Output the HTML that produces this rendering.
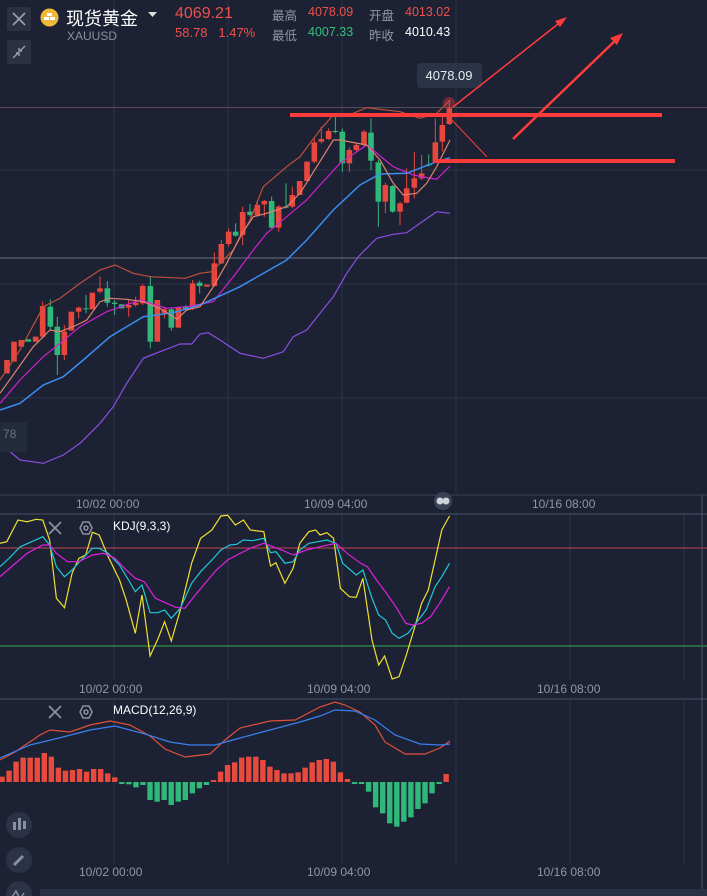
<!DOCTYPE html>
<html><head><meta charset="utf-8"><style>
html,body{margin:0;background:#1c2234;width:707px;height:896px;overflow:hidden}
body{font-family:"Liberation Sans","Noto Sans CJK SC",sans-serif;position:relative}
.t{position:absolute;white-space:nowrap}
.btn{position:absolute;left:7px;width:24px;height:24px;background:#2b3142;border-radius:2px}
.circ{position:absolute;left:6px;width:26px;height:26px;border-radius:50%;background:#2c3346}
</style></head><body>
<svg id="s" width="707" height="896" style="position:absolute;left:0;top:0">
<g stroke="#2c3446" stroke-width="1">
<line x1="114" y1="0" x2="114" y2="493"/><line x1="228" y1="0" x2="228" y2="493"/><line x1="342" y1="0" x2="342" y2="493"/><line x1="456" y1="0" x2="456" y2="493"/>
<line x1="114" y1="514" x2="114" y2="680"/><line x1="228" y1="514" x2="228" y2="680"/><line x1="342" y1="514" x2="342" y2="680"/><line x1="456" y1="514" x2="456" y2="680"/><line x1="570" y1="514" x2="570" y2="680"/><line x1="684" y1="514" x2="684" y2="680"/>
<line x1="114" y1="700" x2="114" y2="864"/><line x1="228" y1="700" x2="228" y2="864"/><line x1="342" y1="700" x2="342" y2="864"/><line x1="456" y1="700" x2="456" y2="864"/><line x1="570" y1="700" x2="570" y2="864"/><line x1="684" y1="700" x2="684" y2="864"/>
<line x1="0" y1="170" x2="707" y2="170"/><line x1="0" y1="284" x2="707" y2="284"/><line x1="0" y1="398" x2="707" y2="398"/>
</g>
<line x1="0" y1="107.5" x2="707" y2="107.5" stroke="#5a4a55"/>
<line x1="0" y1="258" x2="707" y2="258" stroke="#6a7080"/>
<line x1="0" y1="495" x2="707" y2="495" stroke="#3a4256"/>
<line x1="0" y1="514" x2="707" y2="514" stroke="#4a5266"/>
<line x1="0" y1="699" x2="707" y2="699" stroke="#4a5266"/>
<line x1="0" y1="548" x2="707" y2="548" stroke="#c0474e"/>
<line x1="0" y1="646" x2="707" y2="646" stroke="#38b04a"/>
<line x1="702" y1="495" x2="702" y2="896" stroke="#4a5266"/>
<rect x="40" y="889" width="667" height="7" fill="#2a3144"/>
<g id="cd"></g>
<g id="ln" fill="none" stroke-width="1.2"></g>
<rect x="417" y="63" width="65" height="25" rx="3" fill="#2b3447"/>
<text x="449" y="80" fill="#e8ecf2" font-size="13" text-anchor="middle" font-family="Liberation Sans">4078.09</text>
<circle cx="449" cy="103" r="6" fill="#ff4040" opacity=".35"/>
<line x1="290" y1="115" x2="662" y2="115" stroke="#ff3a3a" stroke-width="4"/>
<line x1="433" y1="161" x2="675" y2="161" stroke="#ff3a3a" stroke-width="4"/>
<line x1="453" y1="107" x2="563" y2="20" stroke="#ff3a3a" stroke-width="1.5"/>
<polygon points="567,17 555,21 560,27" fill="#ff3a3a"/>
<line x1="513" y1="139" x2="619" y2="37" stroke="#ff3a3a" stroke-width="2.5"/>
<polygon points="623,33 610,38 617,45" fill="#ff3a3a"/>
<line x1="450" y1="118" x2="487" y2="157" stroke="#ff3a3a" stroke-width="1"/>
<circle cx="443" cy="501" r="9" fill="#3a4256"/><circle cx="440" cy="501" r="3.5" fill="#cfd3dc"/><circle cx="446" cy="501" r="3.5" fill="#cfd3dc"/>
<g stroke="#8a90a0" stroke-width="1.8"><line x1="49" y1="522" x2="61" y2="534"/><line x1="61" y1="522" x2="49" y2="534"/><line x1="49" y1="706" x2="61" y2="718"/><line x1="61" y1="706" x2="49" y2="718"/></g>
<g fill="none" stroke="#8a90a0" stroke-width="1.5"><polygon points="80,528 83,522 89,522 92,528 89,534 83,534"/><circle cx="86" cy="528" r="2"/><polygon points="80,712 83,706 89,706 92,712 89,718 83,718"/><circle cx="86" cy="712" r="2"/></g>
</svg>
<div class="btn" style="top:7px"><svg width="24" height="24"><path d="M6 6L18 18M18 6L6 18" stroke="#9aa0ad" stroke-width="1.6"/></svg></div>
<div class="btn" style="top:40px"><svg width="24" height="24"><path d="M6 18L11 13M13 11L18 6M9 13h3v3M15 11h-3V8" stroke="#9aa0ad" stroke-width="1.4" fill="none"/></svg></div>
<div class="circ" style="top:812px"><svg width="26" height="26"><g fill="#8a90a0"><rect x="7" y="10" width="3" height="8"/><rect x="12" y="6" width="3" height="12"/><rect x="17" y="9" width="3" height="8"/></g></svg></div>
<div class="circ" style="top:847px"><svg width="26" height="26"><path d="M8 18L17 9" stroke="#8a90a0" stroke-width="3"/></svg></div>
<div class="circ" style="top:881px"><svg width="26" height="26"><path d="M6 16l4-6 4 8 4-6" stroke="#8a90a0" stroke-width="1.5" fill="none"/></svg></div>
<svg class="t" style="left:40px;top:8px" width="19" height="19"><circle cx="9.5" cy="9.5" r="9" fill="#f0b838"/><g fill="#fff"><rect x="7" y="5" width="5" height="3"/><rect x="4" y="9" width="5" height="3"/><rect x="10" y="9" width="5" height="3"/></g></svg>
<div class="t" style="left:66px;top:5px;font-size:18px;color:#fff">现货黄金</div>
<svg class="t" style="left:148px;top:12px" width="10" height="6"><path d="M0 0h9L4.5 5z" fill="#ddd"/></svg>
<div class="t" style="left:67px;top:29px;font-size:12px;color:#8a90a0">XAUUSD</div>
<div class="t" style="left:175px;top:5px;font-size:16px;color:#f0504a">4069.21</div>
<div class="t" style="left:175px;top:25px;font-size:13px;color:#f0504a">58.78&nbsp;&nbsp;&nbsp;1.47%</div>
<div class="t" style="left:272px;top:5px;font-size:12.5px;color:#9096a4">最高</div>
<div class="t" style="left:308px;top:5px;font-size:12.5px;color:#f0504a">4078.09</div>
<div class="t" style="left:369px;top:5px;font-size:12.5px;color:#9096a4">开盘</div>
<div class="t" style="left:405px;top:5px;font-size:12.5px;color:#f0504a">4013.02</div>
<div class="t" style="left:272px;top:25px;font-size:12.5px;color:#9096a4">最低</div>
<div class="t" style="left:308px;top:25px;font-size:12.5px;color:#34c07a">4007.33</div>
<div class="t" style="left:369px;top:25px;font-size:12.5px;color:#9096a4">昨收</div>
<div class="t" style="left:405px;top:25px;font-size:12.5px;color:#fff">4010.43</div>
<div class="t" style="left:0;top:422px;width:27px;height:30px;background:#242b3b"></div>
<div class="t" style="left:3px;top:427px;font-size:12px;color:#6a7080">78</div>
<div class="t" style="left:76px;top:497px;font-size:12px;color:#9096a4">10/02 00:00</div>
<div class="t" style="left:304px;top:497px;font-size:12px;color:#9096a4">10/09 04:00</div>
<div class="t" style="left:532px;top:497px;font-size:12px;color:#9096a4">10/16 08:00</div>
<div class="t" style="left:79px;top:682px;font-size:12px;color:#9096a4">10/02 00:00</div>
<div class="t" style="left:307px;top:682px;font-size:12px;color:#9096a4">10/09 04:00</div>
<div class="t" style="left:537px;top:682px;font-size:12px;color:#9096a4">10/16 08:00</div>
<div class="t" style="left:79px;top:865px;font-size:12px;color:#9096a4">10/02 00:00</div>
<div class="t" style="left:307px;top:865px;font-size:12px;color:#9096a4">10/09 04:00</div>
<div class="t" style="left:537px;top:865px;font-size:12px;color:#9096a4">10/16 08:00</div>
<div class="t" style="left:113px;top:519px;font-size:12px;color:#fff">KDJ(9,3,3)</div>
<div class="t" style="left:113px;top:703px;font-size:12px;color:#fff">MACD(12,26,9)</div>
<script>
var NS="http://www.w3.org/2000/svg",cd=document.getElementById('cd'),ln=document.getElementById('ln');
function el(t,a,p){var e=document.createElementNS(NS,t);for(var k in a)e.setAttribute(k,a[k]);p.appendChild(e);return e;}
var R="#e8473e",G="#2fb87a";
var C=[[21,900,940,R],[42,845,905,R],[64,840,860,R],[85,838,845,G],[107,830,845,R],[128,738,830,R,725,835],[151,740,800,G,718,810],[172,800,885,G,770,945],[193,815,885,R,795,900],[214,755,812,R],[236,743,755,R,740,775],[258,745,748,G,705,760],[277,698,748,R],[300,685,695,R,650,700],[322,685,728,G,663,740],[344,728,732,G,720,765],[365,733,745,G],[386,735,743,R,720,770],[407,728,735,R,710,740],[428,678,730,R,672,735],[451,678,845,G,648,865],[472,720,845,R],[493,748,760,R,740,775],[514,748,803,G,742,812],[535,742,803,R],[557,740,748,G,735,752],[578,670,745,R,660,750],[599,668,678,G,662,700],[621,674,680,R],[643,610,678,R,578,680],[664,552,610,R,540,612],[686,515,552,R,505,560],[707,515,527,G,490,530],[728,456,525,R,440,555],[750,455,465,G,432,470],[772,435,465,R,425,470],[793,423,433,R,420,470],[815,423,503,G,410,505],[836,440,503,R,435,515],[858,440,443,G,370,445],[877,405,440,R,380,445],[899,363,405,R],[921,305,363,R],[943,247,305,R,235,310],[964,237,245,R,200,250],[986,213,237,R,205,240],[1006,213,216,G,170,220],[1027,215,310,G,205,335],[1048,270,310,R,262,335],[1069,255,270,R,250,275],[1092,215,255,R,210,260],[1113,218,302,G,175,330],[1135,307,425,G,300,500],[1156,375,425,R,368,460],[1178,378,455,G,375,458],[1200,430,455,R,425,495],[1220,385,428,R,325,430],[1243,355,383,R,275,415],[1265,340,355,R,285,360],[1286,313,316,G,283,320],[1306,247,305,R,175,308],[1327,195,245,R,168,275],[1348,145,192,R,120,195]];
C.forEach(function(c){var x=c[0]/3,t=c[1]/3+60,b=c[2]/3+60;var wt=(c[4]||c[1])/3+60,wb=(c[5]||c[2])/3+60;
el('line',{x1:x,x2:x,y1:wt,y2:wb,stroke:c[3],'stroke-width':1},cd);
el('rect',{x:x-2.8,y:t,width:5.6,height:Math.max(1,b-t),fill:c[3]},cd);});
function pl(pts,col,sx,sy,ox,oy,w){var s=[];for(var i=0;i<pts.length;i+=2)s.push((pts[i]/sx+ox).toFixed(1)+','+(pts[i+1]/sy+oy).toFixed(1));el('polyline',{points:s.join(' '),stroke:col,'stroke-width':w||1.2},ln);}
pl([0,960,60,870,130,740,180,715,240,670,300,630,345,615,400,640,450,650,555,655,600,640,635,635,660,610,700,570,750,480,790,380,860,320,900,290,960,210,1000,165,1060,160,1100,143,1200,155,1260,175,1310,160,1350,120],"#c0503a",3,3,0,60);
pl([0,1150,60,1200,130,1210,190,1185,240,1150,300,1090,340,1040,380,970,430,895,480,875,540,852,575,852,600,822,625,818,660,840,720,880,790,895,850,875,880,830,920,810,960,760,1000,710,1040,640,1075,590,1130,535,1180,523,1220,518,1260,490,1310,455,1350,460],"#8a4fe0",3,3,0,60);
pl([0,1030,60,960,130,890,180,850,240,800,320,755,420,720,500,745,560,740,640,725,700,650,760,570,800,520,860,470,920,420,960,375,1020,310,1100,255,1180,320,1240,345,1310,358,1350,318],"#d020d0",3,3,0,60);
pl([0,1050,60,1030,130,975,190,950,250,900,330,830,430,770,520,758,600,735,720,680,860,600,920,540,1000,450,1080,375,1140,342,1220,340,1310,305,1350,293],"#3a8ef0",3,3,0,60,1.5);
pl([0,1000,50,930,100,860,130,830,150,810,180,815,230,795,260,780,300,725,330,715,380,718,430,725,480,745,530,778,560,750,600,740,640,680,680,610,720,530,760,470,800,460,860,440,900,400,950,320,1000,240,1020,240,1100,255,1140,300,1180,370,1210,405,1250,400,1280,370,1310,320,1350,240],"#e08070",3,3,0,60);
var k=2.218;
pl([0,190,15,185,40,120,60,125,80,118,95,120,110,180,125,355,143,383,160,280,175,235,190,225,205,157,220,165,240,230,265,300,280,360,300,460,315,345,333,528,350,478,365,425,380,483,400,390,425,250,445,175,470,150,490,108,505,106,522,135,540,120,555,150,585,155,600,258,612,248,632,310,650,265,665,190,685,155,700,150,710,165,725,158,740,175,755,325,775,350,790,352,805,295,825,480,840,555,853,528,870,597,885,590,900,530,918,450,935,370,950,330,965,240,980,150,997,108],"#f0e030",k,3,0,480);
pl([0,260,20,235,45,200,70,185,95,170,110,195,125,260,143,290,160,270,180,240,205,205,220,205,240,220,265,255,285,300,300,335,315,315,333,398,350,398,365,390,380,415,400,385,425,310,445,275,470,240,490,210,510,195,525,193,540,180,560,182,585,175,600,218,612,215,632,250,650,245,665,210,685,190,705,185,725,180,745,190,760,250,790,285,805,270,825,355,840,405,855,420,870,460,885,475,905,460,925,425,945,390,965,320,980,290,997,250],"#20c8d8",k,3,0,480);
pl([0,290,30,255,60,220,95,195,110,195,125,220,150,245,175,245,205,225,230,220,255,235,280,270,300,295,320,305,345,355,370,370,390,382,410,385,430,350,455,310,480,270,505,240,530,222,555,205,585,190,605,200,625,210,650,225,680,210,710,200,745,190,770,220,800,250,815,260,835,300,860,345,880,385,900,430,915,435,935,430,955,410,975,370,997,320],"#e020e0",k,3,0,480);
pl([0,760,15,752,40,735,50,730,70,732,90,725,110,721,130,725,150,736,165,749,185,757,210,754,225,740,240,728,270,721,295,720,320,707,335,702,345,705,360,712,375,725,385,742,405,754,425,754,440,748,450,741],"#e0503a",1,1,0,0);
pl([0,758,30,745,55,739,90,730,115,726,145,734,170,742,190,745,215,745,240,738,270,730,300,722,320,716,335,710,355,711,375,720,395,735,420,744,440,745,450,744],"#3a80f0",1,1,0,0);
var H=[140,122,95,83,83,83,69,80,113,122,120,117,125,117,117,130,142,158,163,172,165,210,215,210,225,215,210,190,175,165,150,125,105,97,83,80,80,90,110,120,130,130,127,113,97,90,87,95,127,147,158,158,185,232,250,280,290,275,262,237,220,190,160,132];
var zero=782;H.forEach(function(h,i){var x=2+i*7.05,y=h/3+730;var top=Math.min(y,zero),bot=Math.max(y,zero);if(bot-top<2){bot=top+2;}
el('rect',{x:x-2.7,y:top,width:5.4,height:bot-top,fill:y<zero?"#e84a3e":"#2fb87a"},cd);});
</script>
</body></html>
